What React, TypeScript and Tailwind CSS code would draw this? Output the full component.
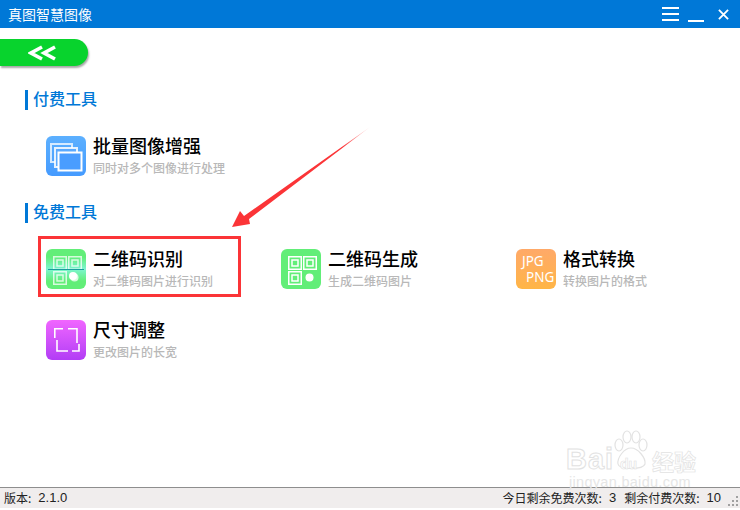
const cjk = "font-['Noto_Sans_CJK_SC','Liberation_Sans',sans-serif]";

function QrIcon() {
  const Finder = ({ x, y }: { x: number; y: number }) => (
    <g>
      <rect x={x + 0.75} y={y + 0.75} width="12.5" height="12.5" fill="none" stroke="white" strokeWidth="1.5" />
      <rect x={x + 4} y={y + 4} width="6" height="6" fill="none" stroke="white" strokeWidth="1.5" />
    </g>
  );
  return (
    <svg viewBox="0 0 40 40" className="w-full h-full">
      <Finder x={7} y={7} />
      <Finder x={22} y={7} />
      <Finder x={7} y={22} />
      <circle cx="28.5" cy="28.5" r="4" fill="white" />
    </svg>
  );
}

function ScanIcon() {
  return (
    <div className="relative w-full h-full">
      <div className="absolute inset-x-0 top-[8px] h-[24px] bg-gradient-to-b from-transparent via-[#7df5d0] to-transparent" />
      <div className="absolute inset-0 opacity-75">
        <QrIcon />
      </div>
      <div className="absolute left-[2px] right-[2px] top-[20px] h-px bg-[#1c9c9c]" />
      <svg viewBox="0 0 40 40" className="absolute inset-0 w-full h-full">
        <circle cx="27" cy="27" r="4" fill="white" />
      </svg>
    </div>
  );
}

function StackIcon() {
  return (
    <svg viewBox="0 0 40 40" className="w-full h-full">
      <rect x="5" y="8" width="21" height="18" fill="none" stroke="white" strokeOpacity="0.75" strokeWidth="2" />
      <rect x="9" y="12" width="22" height="19" fill="#5aa9ff" stroke="white" strokeOpacity="0.85" strokeWidth="2" />
      <rect x="12.5" y="16.5" width="23" height="18" fill="#4a9dff" stroke="white" strokeWidth="2" />
    </svg>
  );
}

function CropIcon() {
  return (
    <svg viewBox="0 0 40 40" className="w-full h-full" fill="none" stroke="white" strokeWidth="1.6">
      <path d="M8.8 18V8.8H17" />
      <path d="M22 8.8H31V23" />
      <path d="M11 20V31H22" />
      <path d="M26 31H33V24" />
    </svg>
  );
}

function FormatIcon() {
  return (
    <div className="flex flex-col w-full h-full pt-[4px] text-white text-[13.5px] leading-[16px] font-['Noto_Sans','Liberation_Sans',sans-serif]">
      <span className="pl-[6px]">JPG</span>
      <span className="pl-[10px]">PNG</span>
    </div>
  );
}

function Tool({ title, sub, bg, icon }: { title: string; sub: string; bg: string; icon: React.ReactNode }) {
  return (
    <div className="flex items-start h-[40px] w-[235px]">
      <div className={`w-[40px] h-[40px] rounded-[6px] overflow-hidden shrink-0 ${bg}`}>{icon}</div>
      <div className="ml-[8px] -mt-[2px] flex flex-col">
        <span className="text-[18px] leading-[22px] font-medium text-black whitespace-nowrap -ml-[1px]">{title}</span>
        <span className="text-[12px] leading-[15px] mt-[4px] font-medium text-[#b8b8b8] whitespace-nowrap -ml-[1px]">{sub}</span>
      </div>
    </div>
  );
}

function Section({ title }: { title: string }) {
  return (
    <div className="flex items-start h-[20px] ml-[25px] border-l-[3px] border-[#0078d7] pl-[5px]">
      <span className="text-[16px] leading-[17px] text-[#0078d7] font-medium">{title}</span>
    </div>
  );
}

export default function App() {
  return (
    <div className={`relative w-[740px] h-[510px] bg-white overflow-hidden flex flex-col ${cjk}`}>
      <header className="h-[28px] bg-[#0078d7] flex items-center justify-between shrink-0">
        <span className="ml-[8px] text-[14px] text-white">真图智慧图像</span>
        <div className="flex items-center mr-[11px] gap-[9px]">
          <div className="flex flex-col gap-[4px] w-[17px]">
            <div className="h-[2px] bg-white" />
            <div className="h-[2px] bg-white" />
            <div className="h-[2px] bg-white" />
          </div>
          <div className="w-[16px] h-[2px] bg-white mt-[14px]" />
          <svg viewBox="0 0 12 12" className="w-[11px] h-[11px] ml-[5px]" stroke="white" strokeWidth="2">
            <path d="M1 1L11 11M11 1L1 11" />
          </svg>
        </div>
      </header>

      <main className="flex-1 flex flex-col">
        <div className="mt-[11px] w-[88px] h-[27px] bg-[#08d32d] rounded-r-[14px] shadow-[1px_2px_2px_rgba(0,0,0,0.35)] flex items-center justify-center">
          <svg viewBox="0 0 30 16" className="w-[30px] h-[16px] ml-[-2px]" fill="none" stroke="white" strokeWidth="3.6">
            <path d="M14 2L3 8L14 14" />
            <path d="M27 2L16 8L27 14" />
          </svg>
        </div>

        <div className="mt-[24px]">
          <Section title="付费工具" />
        </div>
        <div className="mt-[26px] ml-[46px]">
          <Tool
            title="批量图像增强"
            sub="同时对多个图像进行处理"
            bg="bg-gradient-to-b from-[#5cb0ff] to-[#459bff]"
            icon={<StackIcon />}
          />
        </div>

        <div className="mt-[27px]">
          <Section title="免费工具" />
        </div>
        <div className="mt-[26px] ml-[46px] grid grid-cols-[235px_235px_235px] gap-y-[31px]">
          <Tool title="二维码识别" sub="对二维码图片进行识别" bg="bg-[#62ee78]" icon={<ScanIcon />} />
          <Tool title="二维码生成" sub="生成二维码图片" bg="bg-[#62ee78]" icon={<QrIcon />} />
          <Tool
            title="格式转换"
            sub="转换图片的格式"
            bg="bg-gradient-to-b from-[#ffa968] to-[#ffb545]"
            icon={<FormatIcon />}
          />
          <Tool
            title="尺寸调整"
            sub="更改图片的长宽"
            bg="bg-gradient-to-b from-[#f165ff] to-[#b23cf5]"
            icon={<CropIcon />}
          />
        </div>
      </main>

      <footer className="h-[21px] mb-[1px] bg-[#f0eded] border-t border-[#8e8e8e] flex items-center justify-between text-[12px] text-[#222] shrink-0">
        <div className="ml-[4px] flex items-center">
          <span>版本:</span>
          <span className="ml-[7px] text-[13px] font-['Liberation_Sans',sans-serif]">2.1.0</span>
        </div>
        <div className="flex items-center mr-[2px]">
          <span>今日剩余免费次数:</span>
          <span className="ml-[7px] text-[13px] font-['Liberation_Sans',sans-serif]">3</span>
          <span className="ml-[8px]">剩余付费次数:</span>
          <span className="ml-[7px] text-[13px] font-['Liberation_Sans',sans-serif]">10</span>
          <svg viewBox="0 0 10 10" className="ml-[7px] w-[10px] h-[10px] mt-[5px]" fill="#a0a0a0">
            <rect x="8" y="0" width="2" height="2" />
            <rect x="4" y="4" width="2" height="2" />
            <rect x="8" y="4" width="2" height="2" />
            <rect x="0" y="8" width="2" height="2" />
            <rect x="4" y="8" width="2" height="2" />
            <rect x="8" y="8" width="2" height="2" />
          </svg>
        </div>
      </footer>
      <div className="h-[1px] bg-white" />

      {/* annotation overlay */}
      <div className="absolute left-[38px] top-[236px] w-[203px] h-[61px] border-[3px] border-[#fb3437]" />
      <svg className="absolute inset-0 w-[740px] h-[510px] pointer-events-none" viewBox="0 0 740 510">
        <defs>
          <linearGradient id="arrowFade" x1="370" y1="127" x2="232" y2="227" gradientUnits="userSpaceOnUse">
            <stop offset="0" stopColor="#fb3437" stopOpacity="0.15" />
            <stop offset="0.2" stopColor="#fb3437" />
            <stop offset="1" stopColor="#fb3437" />
          </linearGradient>
        </defs>
        <polygon points="370,127 249,219 250,224 232,227 240,211 244,216" fill="url(#arrowFade)" />
      </svg>

      {/* watermark */}
      <div className="absolute left-[566px] top-[428px] w-[140px] h-[60px] pointer-events-none">
        <span className="absolute left-0 top-[14px] text-[29px] leading-[34px] font-bold tracking-[1px] text-white [-webkit-text-stroke:1px_#e2e2e2] font-['Liberation_Sans',sans-serif]">
          Bai
        </span>
        <svg viewBox="0 0 44 44" className="absolute left-[41px] top-[0px] w-[44px] h-[44px]" fill="none" stroke="#e2e2e2" strokeWidth="1.2">
          <ellipse cx="12" cy="17" rx="4" ry="6" />
          <ellipse cx="20" cy="9" rx="4" ry="6" />
          <ellipse cx="29" cy="9" rx="4" ry="6" />
          <ellipse cx="36" cy="17" rx="4" ry="6" />
          <path d="M24 20C17 20 10 30 11 36C12 42 36 42 38 36C39 30 31 20 24 20Z" />
        </svg>
        <span className="absolute left-[54px] top-[29px] text-[14px] leading-[14px] font-bold text-white [-webkit-text-stroke:0.6px_#e2e2e2] font-['Liberation_Sans',sans-serif]">
          du
        </span>
        <span className="absolute left-[86px] top-[19px] text-[22px] leading-[26px] font-bold text-white [-webkit-text-stroke:0.7px_#e2e2e2]">
          经验
        </span>
        <span className="absolute left-[3px] top-[49px] text-[14.5px] leading-[11px] tracking-[0.3px] text-[#e6e6e6] font-['Liberation_Sans',sans-serif] whitespace-nowrap">
          jingyan.baidu.com
        </span>
      </div>
    </div>
  );
}
